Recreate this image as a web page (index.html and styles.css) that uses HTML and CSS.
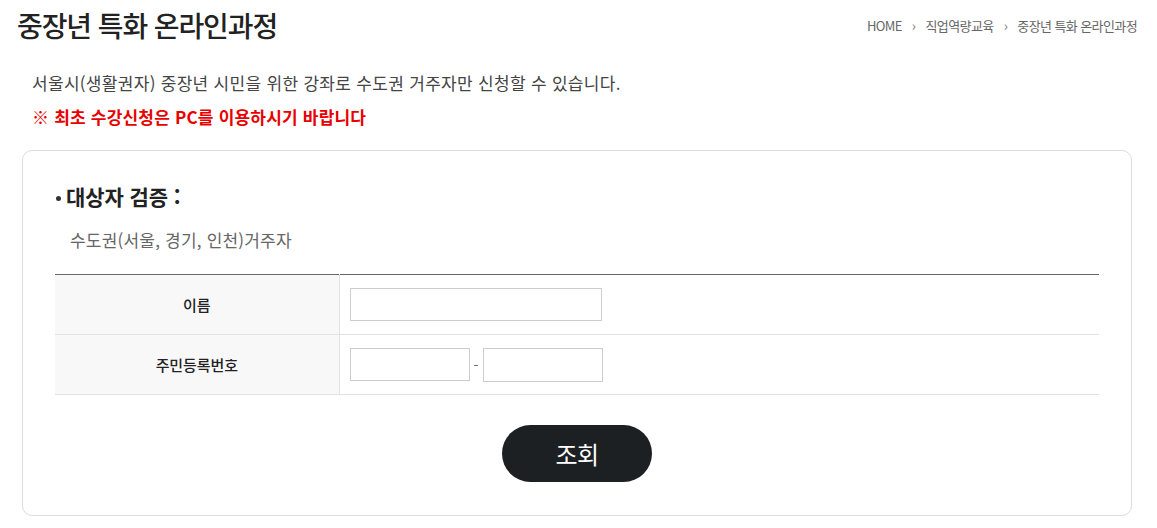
FILE: index.html
```html
<!DOCTYPE html>
<html lang="ko">
<head>
<meta charset="utf-8">
<title>중장년 특화 온라인과정</title>
<link rel="stylesheet" href="styles.css">
</head>
<body>
<div class="page">
  <header class="page-head">
    <h1 class="page-title">중장년 특화 온라인과정</h1>
    <nav class="crumbs">
      <span>HOME</span><span class="sep">›</span><span>직업역량교육</span><span class="sep">›</span><span>중장년 특화 온라인과정</span>
    </nav>
  </header>

  <div class="notice">
    <p class="notice-text">서울시(생활권자) 중장년 시민을 위한 강좌로 수도권 거주자만 신청할 수 있습니다.</p>
    <p class="notice-warn">※ 최초 수강신청은 PC를 이용하시기 바랍니다</p>
  </div>

  <section class="card">
    <h2 class="card-title"><span class="dot"></span>대상자 검증 :</h2>
    <p class="card-desc">수도권(서울, 경기, 인천)거주자</p>
    <table class="form-table">
      <tr>
        <th>이름</th>
        <td><input class="inp inp-name" type="text"></td>
      </tr>
      <tr>
        <th>주민등록번호</th>
        <td><div class="ssn"><input class="inp inp-ssn" type="text"><span class="dash">-</span><input class="inp inp-ssn2" type="password"></div></td>
      </tr>
    </table>
    <div class="actions"><button class="btn" type="button">조회</button></div>
  </section>
</div>
</body>
</html>
```

FILE: styles.css
```css
* { box-sizing: border-box; }
html, body { margin: 0; padding: 0; background: #fff; }
body {
  font-family: "Noto Sans CJK KR", "Noto Sans", "Liberation Sans", sans-serif;
  color: #222;
}
.page { width: 1157px; padding: 0 20px 0 17px; }

.page-head {
  display: flex;
  align-items: center;
  justify-content: space-between;
  height: 50px;
}
.page-title {
  margin: 0;
  font-size: 28px;
  font-weight: 500;
  letter-spacing: -1.1px;
  color: #222;
}
.crumbs {
  display: flex;
  align-items: center;
  font-size: 13px;
  letter-spacing: -0.6px;
  color: #666;
}
.crumbs .sep { margin: 0 10px; font-size: 14px; color: #777; }

.notice { padding: 16px 0 0 15px; }
.notice p { margin: 0; }
.notice-text {
  font-size: 17px;
  letter-spacing: 0.3px;
  color: #444;
  line-height: 34px;
  height: 34px;
}
.notice-warn {
  font-size: 17px;
  font-weight: 700;
  letter-spacing: 0.2px;
  color: #e80000;
  line-height: 34px;
}

.card {
  margin: 16px 0 0 5px;
  width: 1110px;
  height: 366px;
  border: 1px solid #ddd;
  border-radius: 10px;
  padding: 26px 32px 0 32px;
}
.card-title {
  margin: 0;
  display: flex;
  align-items: center;
  font-size: 21px;
  font-weight: 700;
  letter-spacing: -0.1px;
  color: #222;
  height: 38px;
}
.dot {
  width: 5px; height: 5px; border-radius: 50%;
  background: #333;
  margin: 4px 5px 0 1px;
}
.card-desc {
  margin: 11px 0 0 15px;
  font-size: 17px;
  letter-spacing: 0.2px;
  color: #666;
  line-height: 28px;
}
.form-table {
  margin: 20px 0 0 0;
  width: 1044px;
  border-collapse: collapse;
  border-top: 1px solid #666;
}
.form-table tr { border-bottom: 1px solid #e2e2e2; }
.form-table th {
  width: 284px;
  height: 60px;
  background: #f8f8f8;
  border-right: 1px solid #e2e2e2;
  font-size: 15px;
  font-weight: 500;
  letter-spacing: -0.1px;
  color: #222;
  padding: 0;
}
.form-table td { padding: 0 0 0 10px; height: 60px; }
.inp {
  display: block;
  height: 33px;
  border: 1px solid #ccc;
  background: #fff;
  padding: 0 6px;
  font: inherit;
  outline: none;
}
.inp-name { width: 252px; }
.ssn { display: flex; align-items: center; }
.inp-ssn { width: 120px; }
.inp-ssn2 { width: 120px; height: 34px; }
.dash { width: 13px; text-align: center; color: #666; font-size: 14px; }

.actions { display: flex; justify-content: center; padding-top: 30px; }
.btn {
  width: 150px;
  height: 57px;
  border: 0;
  border-radius: 29px;
  background: #1c2023;
  color: #fff;
  font-family: inherit;
  font-size: 24px;
  font-weight: 400;
  letter-spacing: -0.5px;
}
```
